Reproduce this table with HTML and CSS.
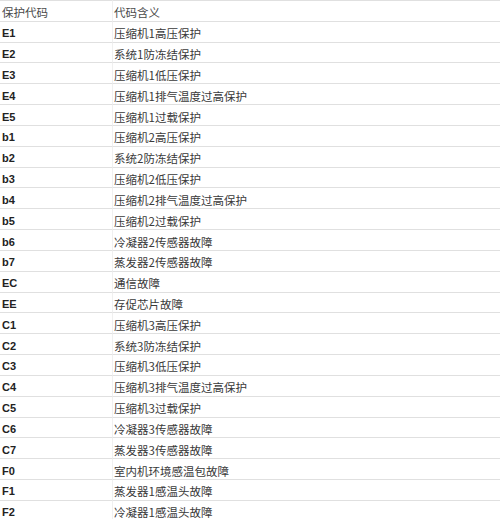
FILE: index.html
```html
<!DOCTYPE html>
<html lang="zh-CN">
<head>
<meta charset="utf-8">
<title>保护代码</title>
<link rel="stylesheet" href="styles.css">
</head>
<body>
<div class="table">
  <div class="cell code head">保护代码</div><div class="cell desc head">代码含义</div>
  <div class="cell code">E1</div><div class="cell desc">压缩机1高压保护</div>
  <div class="cell code">E2</div><div class="cell desc">系统1防冻结保护</div>
  <div class="cell code">E3</div><div class="cell desc">压缩机1低压保护</div>
  <div class="cell code">E4</div><div class="cell desc">压缩机1排气温度过高保护</div>
  <div class="cell code">E5</div><div class="cell desc">压缩机1过载保护</div>
  <div class="cell code">b1</div><div class="cell desc">压缩机2高压保护</div>
  <div class="cell code">b2</div><div class="cell desc">系统2防冻结保护</div>
  <div class="cell code">b3</div><div class="cell desc">压缩机2低压保护</div>
  <div class="cell code">b4</div><div class="cell desc">压缩机2排气温度过高保护</div>
  <div class="cell code">b5</div><div class="cell desc">压缩机2过载保护</div>
  <div class="cell code">b6</div><div class="cell desc">冷凝器2传感器故障</div>
  <div class="cell code">b7</div><div class="cell desc">蒸发器2传感器故障</div>
  <div class="cell code">EC</div><div class="cell desc">通信故障</div>
  <div class="cell code">EE</div><div class="cell desc">存促芯片故障</div>
  <div class="cell code">C1</div><div class="cell desc">压缩机3高压保护</div>
  <div class="cell code">C2</div><div class="cell desc">系统3防冻结保护</div>
  <div class="cell code">C3</div><div class="cell desc">压缩机3低压保护</div>
  <div class="cell code">C4</div><div class="cell desc">压缩机3排气温度过高保护</div>
  <div class="cell code">C5</div><div class="cell desc">压缩机3过载保护</div>
  <div class="cell code">C6</div><div class="cell desc">冷凝器3传感器故障</div>
  <div class="cell code">C7</div><div class="cell desc">蒸发器3传感器故障</div>
  <div class="cell code">F0</div><div class="cell desc">室内机环境感温包故障</div>
  <div class="cell code">F1</div><div class="cell desc">蒸发器1感温头故障</div>
  <div class="cell code">F2</div><div class="cell desc">冷凝器1感温头故障</div>
</div>
</body>
</html>
```

FILE: styles.css
```css
html, body {
  margin: 0;
  padding: 0;
  background: #ffffff;
}
.table {
  display: grid;
  grid-template-columns: 113px 1fr;
  grid-auto-rows: 20.833px;
  width: 500px;
}
.cell {
  border-top: 1px solid #e0e0e0;
  display: flex;
  align-items: center;
  padding-top: 3px;
  box-sizing: border-box;
  white-space: nowrap;
  overflow: hidden;
}
.code {
  padding-left: 2px;
  border-right: 1px solid #f0f0f0;
  font-family: "Liberation Sans", Arial, sans-serif;
  font-weight: bold;
  font-size: 11px;
  color: #222222;
}
.desc {
  padding-left: 1px;
  font-family: "Noto Sans CJK SC", sans-serif;
  font-size: 11.5px;
  color: #3a3a3a;
}
.head {
  font-family: "Noto Sans CJK SC", sans-serif;
  font-weight: normal;
  font-size: 11.5px;
  color: #4a4a4a;
}
```
